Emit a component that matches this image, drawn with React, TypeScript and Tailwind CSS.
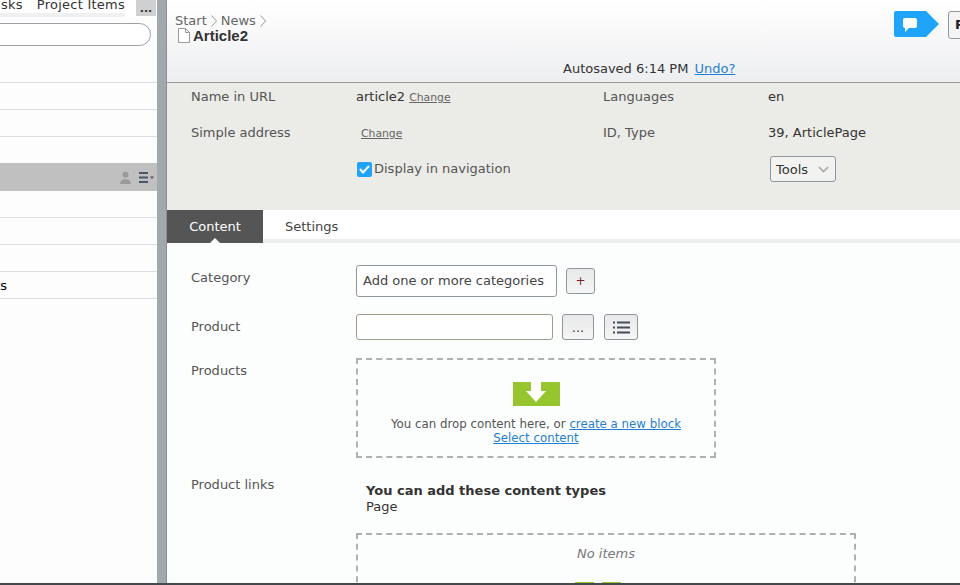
import { ChevronDown } from "lucide-react";

const Chevron = () => (
  <svg width="6" height="12" viewBox="0 0 6 12" className="mx-[4px] mt-[2px] inline-block shrink-0">
    <path d="M0.5 0.5L5.5 6L0.5 11.5" fill="none" stroke="#9a9a9a" />
  </svg>
);

const DropArrow = ({ className }: { className?: string }) => (
  <div className={"flex items-start justify-center bg-[#97c52e] " + (className ?? "")}>
    <svg width="20" height="20" viewBox="0 0 20 20">
      <path d="M5 0H15V9H20L10 20L0 9H5Z" fill="#fff" />
    </svg>
  </div>
);

const ListRow = ({ text }: { text?: string }) => (
  <div className="h-[27px] border-b border-[#dcdde2] bg-[#fdfdfd] leading-[27px] whitespace-nowrap">{text}</div>
);

const Sidebar = () => (
  <aside className="flex h-full w-[157px] shrink-0 flex-col overflow-hidden bg-[#fdfdfd]">
    <div className="flex h-[17px] shrink-0 bg-white">
      <div className="flex min-w-0 flex-1 justify-end border-b-[4px] border-[#eff0f1]">
        <div className="-mt-[4px] flex shrink-0 gap-[14px] leading-[17px] tracking-[0.25px] text-[#333] whitespace-nowrap">
          <span>Tasks</span>
          <span>Project Items</span>
        </div>
      </div>
      <div className="ml-[11px] mr-px flex h-[16px] w-[20px] shrink-0 items-end justify-center bg-[#cfd0d2] pb-[3px] text-[11px] font-bold leading-[8px] text-[#333]">
        ...
      </div>
    </div>
    <div className="h-[6px] shrink-0" />
    <div className="-ml-[40px] mr-[6px] h-[23px] shrink-0 rounded-full border border-[#9ba1a6] bg-white" />
    <div className="h-[37px] shrink-0 border-b border-[#dcdde2]" />
    <ListRow />
    <ListRow />
    <div className="h-[26px] shrink-0" />
    <div className="flex h-[28px] shrink-0 items-center justify-end gap-[7px] bg-[#c0c0c0] pr-[3px]">
      <svg width="13" height="13" viewBox="0 0 12 12">
        <circle cx="6" cy="3.5" r="2.8" fill="#9a9a9a" />
        <path d="M1 12C1 8.5 3.5 7.5 6 7.5S11 8.5 11 12Z" fill="#9a9a9a" />
      </svg>
      <svg width="15" height="11" viewBox="0 0 15 11">
        <path d="M0 1H9M0 5.5H9M0 10H9" stroke="#4b5563" strokeWidth="2" />
        <path d="M11 4.5H15L13 7Z" fill="#4b5563" />
      </svg>
    </div>
    <ListRow />
    <ListRow />
    <ListRow />
    <div className="-ml-[49px]">
      <ListRow text="Products" />
    </div>
    <div className="flex-1" />
  </aside>
);

const Toolbar = () => (
  <header className="relative h-[83px] shrink-0 border-b border-[#999] bg-gradient-to-b from-white to-[#edeef0] pl-[8px]">
    <div className="flex pt-[13px] leading-[15px] text-[#666]">
      <span>Start</span>
      <Chevron />
      <span>News</span>
      <Chevron />
    </div>
    <div className="-mt-px flex items-center gap-[3px] pl-[2px] leading-[17px]">
      <svg width="13" height="15" viewBox="0 0 13 15">
        <path d="M1.5 0.5H8.5L12.5 4.5V14.5H1.5Z M8.5 0.5V4.5H12.5" fill="#fff" stroke="#999" />
      </svg>
      <span className="text-[15px] font-bold text-[#333] font-['Liberation_Sans']">Article2</span>
    </div>
    <div className="absolute left-[727px] top-[11px] flex">
      <svg width="45" height="26" viewBox="0 0 45 26">
        <path d="M2 0H32L45 13L32 26H2Q0 26 0 24V2Q0 0 2 0Z" fill="#1fa4f9" />
        <path d="M11 7H21Q23 7 23 9V15Q23 17 21 17H15L11 21V17Q9 17 9 15V9Q9 7 11 7Z" fill="#fff" />
      </svg>
      <div className="ml-[9px] flex h-[28px] w-[40px] items-center rounded-[3px] border border-[#8f979e] bg-[#f4f4f4] pl-[6px] text-[13px] font-bold text-[#222]">
        P
      </div>
    </div>
    <div className="absolute inset-x-0 top-[61px] pl-[396px] leading-[16px] text-[#333] whitespace-nowrap">
      Autosaved 6:14 PM <a className="ml-[2px] text-[#1f7fd0] underline">Undo?</a>
    </div>
  </header>
);

const MetaPanel = () => (
  <section className="grid h-[127px] shrink-0 grid-cols-[165px_247px_165px_1fr] auto-rows-[26px] gap-y-[10px] bg-[#ebebe7] pl-[24px] pt-px leading-[26px] text-[#555]">
    <span>Name in URL</span>
    <span className="text-[#333]">
      article2 <a className="text-[10.8px] text-[#666] underline">Change</a>
    </span>
    <span>Languages</span>
    <span className="text-[#333]">en</span>
    <span>Simple address</span>
    <span className="pl-[5px]">
      <a className="text-[10.8px] text-[#666] underline">Change</a>
    </span>
    <span>ID, Type</span>
    <span className="text-[#333]">39, ArticlePage</span>
    <span />
    <div className="flex items-center gap-[2px] whitespace-nowrap">
      <span className="ml-px flex h-[15px] w-[15px] items-center justify-center rounded-[2px] bg-[#1fa4f9]">
        <svg width="11" height="9" viewBox="0 0 11 9">
          <path d="M1 4L4 7.5L10 1" fill="none" stroke="#fff" strokeWidth="2" />
        </svg>
      </span>
      Display in navigation
    </div>
    <span />
    <div className="pl-[2px]">
      <div className="flex h-[26px] w-[66px] items-center justify-between rounded-[3px] border border-[#8f979e] bg-[#f2f2f0] pl-[5px] pr-[3px] leading-none text-[#333]">
        Tools
        <ChevronDown size={17} strokeWidth={2} className="text-[#aaa]" />
      </div>
    </div>
  </section>
);

const Tabs = () => (
  <nav className="flex h-[33px] shrink-0 border-b-[4px] border-[#eeeeee] bg-white">
    <div className="relative -mb-[4px] flex h-[33px] w-[96px] items-center justify-center bg-[#555] pt-px text-white">
      Content
      <span className="absolute bottom-0 left-1/2 h-0 w-0 -translate-x-1/2 border-x-[5px] border-b-[5px] border-x-transparent border-b-white" />
    </div>
    <div className="flex h-[33px] items-center pl-[22px] pt-px text-[#444]">Settings</div>
  </nav>
);

const btn = "flex h-[26px] items-center justify-center rounded-[3px] border border-[#8f979e] bg-gradient-to-b from-[#e8e9ea] to-[#f5f5f5]";

const ContentForm = () => (
  <section className="flex-1 overflow-hidden bg-[#fcfdfd] pl-[24px] pt-[22px] text-[#555]">
    <div className="grid h-[49px] grid-cols-[165px_1fr]">
      <span className="leading-[26px]">Category</span>
      <div className="flex items-start gap-[9px]">
        <div className="flex h-[32px] w-[201px] items-center rounded-[3px] border border-[#8f979e] bg-white pl-[6px] text-[#444]">
          Add one or more categories
        </div>
        <div className={btn + " mt-[3px] w-[29px] text-[12px] text-[#7a1f2b]"}>+</div>
      </div>
    </div>
    <div className="grid h-[44px] grid-cols-[165px_1fr]">
      <span className="leading-[26px]">Product</span>
      <div className="flex items-start">
        <div className="h-[26px] w-[197px] rounded-[3px] border border-[#9aa08a] bg-white" />
        <div className={btn + " ml-[9px] w-[32px] leading-none text-[#333]"}>...</div>
        <div className={btn + " ml-[10px] w-[34px]"}>
          <svg width="17" height="13" viewBox="0 0 17 13">
            <path d="M0 1.5H2M4 1.5H17M0 6.5H2M4 6.5H17M0 11.5H2M4 11.5H17" stroke="#444c58" strokeWidth="2" />
          </svg>
        </div>
      </div>
    </div>
    <div className="grid h-[119px] grid-cols-[165px_1fr]">
      <span className="leading-[26px]">Products</span>
      <div className="flex h-[100px] w-[360px] flex-col items-center border-2 border-dashed border-[#b0b0b4] pt-[22px] text-[11.8px] leading-[14px]">
        <DropArrow className="mb-[11px] h-[24px] w-[47px]" />
        <p className="text-center whitespace-nowrap">
          You can drop content here, or <a className="text-[#1f7fd0] underline">create a new block</a>
          <br />
          <a className="text-[#1f7fd0] underline">Select content</a>
        </p>
      </div>
    </div>
    <div className="grid grid-cols-[165px_1fr]">
      <span className="leading-[16px]">Product links</span>
      <div className="pt-[6px]">
        <div className="pl-[10px] leading-[16px] text-[#333]">
          <div className="font-bold">You can add these content types</div>
          <div>Page</div>
        </div>
        <div className="relative mt-[18px] h-[60px] w-[500px] border-2 border-dashed border-[#b0b0b4] pt-[11px] text-center italic leading-[16px] text-[#777]">
          No items
          <div className="absolute left-[217px] top-[47px] flex gap-[8px]">
            <div className="h-[4px] w-[19px] bg-[#97c52e]" />
            <div className="h-[4px] w-[19px] bg-[#97c52e]" />
          </div>
        </div>
      </div>
    </div>
  </section>
);

export default function App() {
  return (
    <div className="flex h-[585px] w-[960px] flex-col overflow-hidden bg-white font-['DejaVu_Sans',sans-serif] text-[13px]">
      <div className="flex min-h-0 flex-1">
        <Sidebar />
        <div className="w-[10px] shrink-0 border-r border-[#8a8f93] bg-[#a3a8ac]" />
        <main className="flex min-w-0 flex-1 flex-col">
          <Toolbar />
          <MetaPanel />
          <Tabs />
          <ContentForm />
        </main>
      </div>
      <div className="h-[2px] shrink-0 bg-[#444a4c]" />
    </div>
  );
}
